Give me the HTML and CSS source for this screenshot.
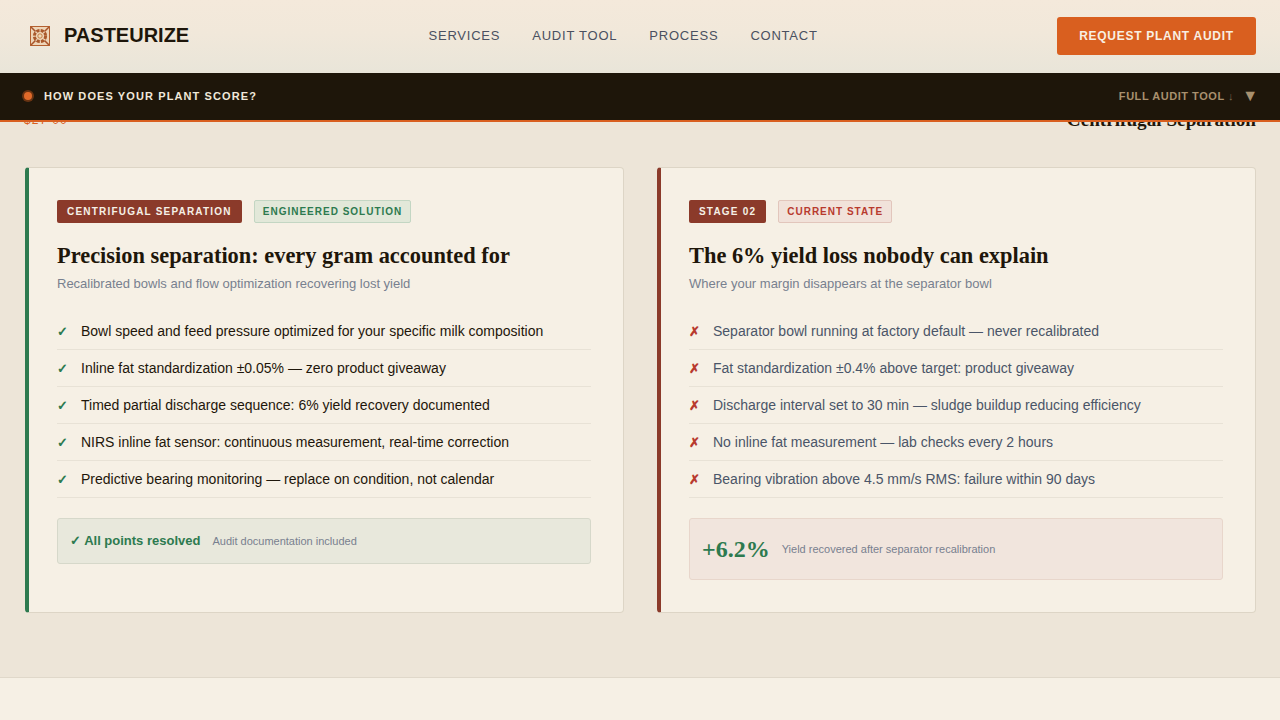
FILE: index.html
```html
<!DOCTYPE html>
<html lang="en">
<head>
<meta charset="utf-8">
<title>Pasteurize</title>
<link rel="stylesheet" href="styles.css">
</head>
<body>
<header class="nav">
  <a class="brand">
    <svg class="logo" width="20" height="20" viewBox="0 0 20 20">
      <rect x=".5" y=".5" width="19" height="19" fill="#eed5b8" stroke="#b4602f"/>
      <path d="M1 1l4.5 4.5M19 1l-4.5 4.5M1 19l4.5-4.5M19 19l-4.5-4.5" stroke="#a8532a" stroke-width="1.5"/>
      <circle cx="10" cy="10" r="5.6" fill="none" stroke="#a9582b" stroke-width="3" stroke-dasharray="3.2 1.2"/>
      <circle cx="10" cy="10" r="2.2" fill="#f0d8b4" stroke="#b8682f" stroke-width=".8"/>
    </svg>
    <span class="brand-name">PASTEURIZE</span>
  </a>
  <nav class="links">
    <a>SERVICES</a><a>AUDIT TOOL</a><a>PROCESS</a><a>CONTACT</a>
  </nav>
  <a class="cta">REQUEST PLANT AUDIT</a>
</header>
<div class="bar">
  <div class="bar-left"><span class="dot"></span><span class="bar-title">HOW DOES YOUR PLANT SCORE?</span></div>
  <div class="bar-right"><span class="bar-link">FULL AUDIT TOOL <span class="arrow">↓</span></span><span class="caret">▼</span></div>
</div>
<main class="stage">
  <div class="peek"><span class="peek-price">$27 00</span><span class="peek-title">Centrifugal Separation</span></div>
  <div class="cards">
    <article class="card good">
      <div class="tags"><span class="tag solid">CENTRIFUGAL SEPARATION</span><span class="tag green">ENGINEERED SOLUTION</span></div>
      <h2>Precision separation: every gram accounted for</h2>
      <p class="sub">Recalibrated bowls and flow optimization recovering lost yield</p>
      <ul class="points">
        <li><span class="mark">✓</span>Bowl speed and feed pressure optimized for your specific milk composition</li>
        <li><span class="mark">✓</span>Inline fat standardization ±0.05% — zero product giveaway</li>
        <li><span class="mark">✓</span>Timed partial discharge sequence: 6% yield recovery documented</li>
        <li><span class="mark">✓</span>NIRS inline fat sensor: continuous measurement, real-time correction</li>
        <li><span class="mark">✓</span>Predictive bearing monitoring — replace on condition, not calendar</li>
      </ul>
      <div class="result"><strong>✓ All points resolved</strong><span class="note">Audit documentation included</span></div>
    </article>
    <article class="card bad">
      <div class="tags"><span class="tag solid">STAGE 02</span><span class="tag red">CURRENT STATE</span></div>
      <h2>The 6% yield loss nobody can explain</h2>
      <p class="sub">Where your margin disappears at the separator bowl</p>
      <ul class="points">
        <li><span class="mark">✗</span>Separator bowl running at factory default — never recalibrated</li>
        <li><span class="mark">✗</span>Fat standardization ±0.4% above target: product giveaway</li>
        <li><span class="mark">✗</span>Discharge interval set to 30 min — sludge buildup reducing efficiency</li>
        <li><span class="mark">✗</span>No inline fat measurement — lab checks every 2 hours</li>
        <li><span class="mark">✗</span>Bearing vibration above 4.5 mm/s RMS: failure within 90 days</li>
      </ul>
      <div class="result"><span class="big">+6.2%</span><span class="note">Yield recovered after separator recalibration</span></div>
    </article>
  </div>
</main>
<div class="next"></div>
</body>
</html>
```
FILE: styles.css
```css
* { box-sizing: border-box; }
html, body { margin: 0; height: 100%; }
body {
  height: 720px;
  overflow: hidden;
  background: #ede5d8;
  font-family: "Liberation Sans", Arial, sans-serif;
  color: #1e160a;
  display: flex;
  flex-direction: column;
}
.nav {
  height: 73px;
  flex: none;
  display: flex;
  align-items: center;
  justify-content: space-between;
  padding: 0 24px 2px 30px;
  background: linear-gradient(180deg, #f4e9db 0%, #f1e8da 45%, #e9e5d9 100%);
  position: relative;
}
.brand { display: flex; align-items: center; gap: 14px; }
.logo { display: block; }
.brand-name { font-size: 20px; font-weight: 700; }
.links { display: flex; gap: 32px; }
.links a { font-size: 13px; letter-spacing: .78px; color: #4a5060; }
.cta {
  background: #d95f1f;
  color: #f8efe2;
  font-size: 12px;
  font-weight: 700;
  letter-spacing: .72px;
  height: 38px;
  width: 199px;
  display: flex;
  align-items: center;
  justify-content: center;
  border-radius: 3px;
}
.bar {
  height: 49px;
  flex: none;
  background: #1e160a;
  border-bottom: 2px solid #d95f1f;
  display: flex;
  align-items: center;
  justify-content: space-between;
  padding: 0 22px 2px 24px;
  position: relative;
  z-index: 2;
}
.bar-left { display: flex; align-items: center; gap: 12px; }
.dot {
  width: 8px; height: 8px; border-radius: 50%;
  background: #e06a2a;
  box-shadow: 0 0 0 2px rgba(217,95,31,.4);
}
.bar-title { font-size: 11px; font-weight: 700; letter-spacing: 1.1px; color: #f0e8da; }
.bar-right { display: flex; align-items: center; gap: 8px; }
.bar-link { font-size: 11px; font-weight: 700; letter-spacing: .55px; color: #a8906e; }
.arrow { font-weight: 400; opacity: .7; }
.caret { font-size: 16px; line-height: 1; color: #a8906e; }
.stage { flex: 1; padding: 0 24px 0 25px; position: relative; }
.peek {
  position: absolute; left: 24px; right: 24px; top: -13px;
  display: flex; justify-content: space-between; align-items: center;
}
.peek-price { font-size: 12px; color: #d95f1f; letter-spacing: 1.2px; }
.peek-title { font-family: "Liberation Serif", serif; font-size: 19.2px; font-weight: 700; }
.cards { display: grid; grid-template-columns: 599px 599px; gap: 33px; padding-top: 45px; }
.card {
  height: 446px;
  background: #f6f0e5;
  border: 1px solid #ddd5c6;
  border-left: 4px solid #2d7a4f;
  border-radius: 4px;
  padding: 32px 32px 0 28px;
}
.card.bad { border-left-color: #8b3a2a; }
.tags { display: flex; gap: 12px; }
.tag {
  height: 23px; display: flex; align-items: center;
  padding: 0 10px;
  font-size: 10px; font-weight: 700; letter-spacing: 1.2px;
  border-radius: 2px;
}
.solid { background: #8b3a2a; color: #f5f0e6; }
.green { background: #e2e8d9; color: #2d7a4f; border: 1px solid #c3d6c3; padding: 0 8px; letter-spacing: 1px; }
.red { background: #f1e2da; color: #b83a2e; border: 1px solid #e2c6bc; padding: 0 8px; letter-spacing: 1px; }
h2 {
  font-family: "Liberation Serif", serif;
  font-size: 22.4px; line-height: 28px; font-weight: 700;
  margin: 19px 0 0;
  color: #1e160a;
}
.sub { margin: 5px 0 0; font-size: 13px; line-height: 18px; color: #78808f; }
.points { list-style: none; margin: 20px 0 0; padding: 0; }
.points li {
  height: 37px; display: flex; align-items: center;
  font-size: 14px; color: #1e160a;
  border-bottom: 1px solid #e8e2d6;
}
.bad .points li { color: #4a5568; }
.mark { width: 24px; flex: none; font-size: 13px; font-weight: 700; color: #2d7a4f; }
.bad .mark { color: #b83a2e; }
.result {
  margin-top: 20px;
  display: flex; align-items: center;
  height: 46px;
  padding: 0 12px;
  background: #e8e8dc;
  border: 1px solid #d6d8ca;
  border-radius: 3px;
}
.bad .result {
  height: 62px;
  background: #f1e5dd;
  border-color: #e8d6cb;
}
.result strong { font-size: 13px; color: #2d7a4f; margin-top: -2px; }
.note { font-size: 11px; color: #78808f; margin-left: 12px; }
.big { font-family: "Liberation Serif", serif; font-size: 24px; font-weight: 700; color: #2d7a4f; }
.next { height: 43px; flex: none; background: #f6f0e5; border-top: 1px solid #e0d8ca; }
```
